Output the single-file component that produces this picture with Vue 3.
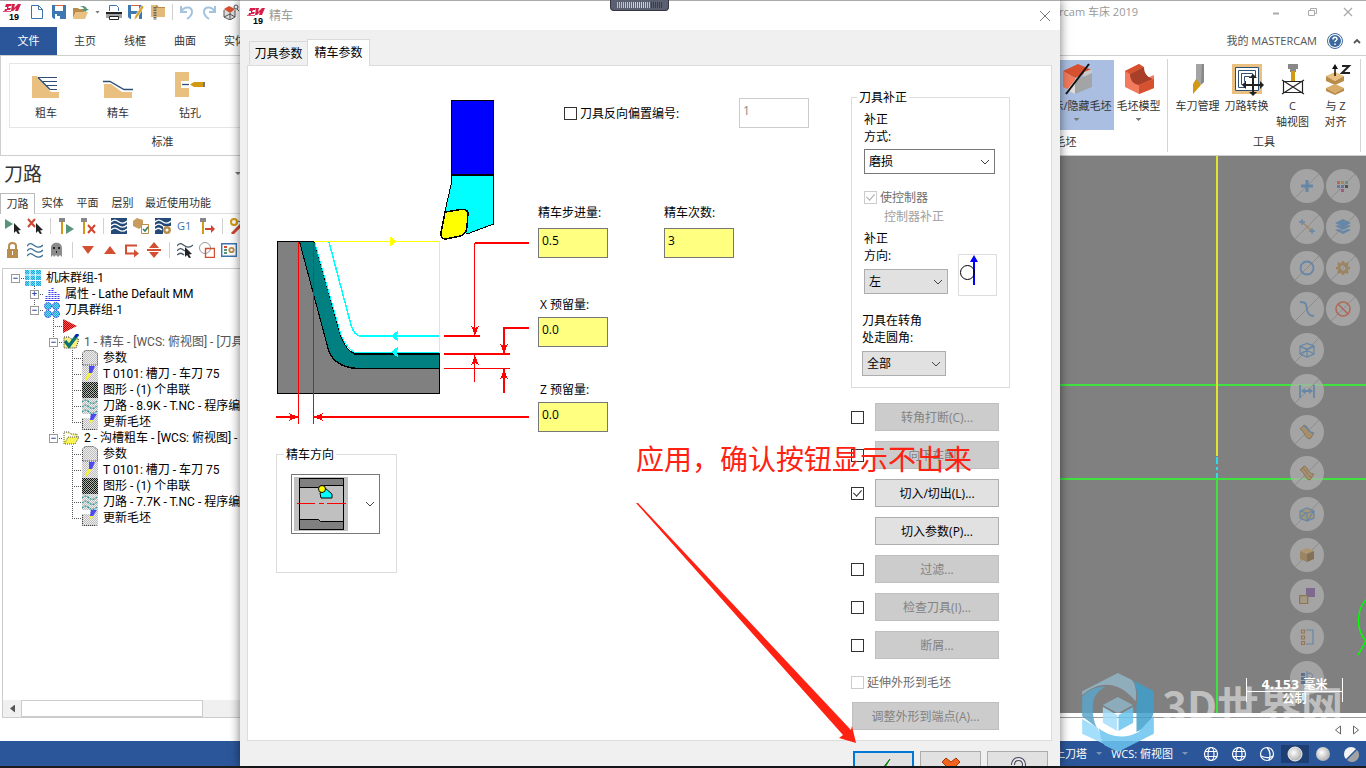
<script setup>
import { ref } from 'vue'

const icons = {
  logo: '<path d="M3 1h6l-1 2H6L5 5h3L7 7H4l-1 2H1l1-3h2V4H2z M9 1h3l-1 4 4-4h3l-3 7h-3l1-3-3 3H8z" fill="#d6204b"/><path d="M0 8h8v1H0z" fill="#e2557a"/><text x="6" y="17" font-family="Liberation Sans, sans-serif" font-weight="bold" font-size="9" fill="#000">19</text>',
  newFile: '<path d="M2.500 1.500h7l4 4v9h-11z M9.500 1.500v4h4" fill="#fff" stroke="#3d74ad"/>',
  save: '<path d="M1 1h14v14H3l-2-2z" fill="#3e78b3"/><path d="M4 1h8v6H4z M4 10h8v5H4z" fill="#fff"/><path d="M6 10h6v5H9v-3H6z" fill="#3e78b3"/><path d="M4 1h8v1H4z" fill="#d8643a"/>',
  open: '<path d="M0 4h5l1 1h5v3H3l-3 6z" fill="#b98c48"/><path d="M3 8h12l-3 7H0z" fill="#e8c080"/><path d="M7 3c3-2 6-1 7 2h2l-4 3-3-3h2c-1-2-2-2-4-2z" fill="#579479"/>',
  print: '<path d="M3.500 7V1.500h7l2 2V7" fill="#fff" stroke="#3d74ad"/><path d="M0 8h16v6H0z" fill="#a0a1a5"/><path d="M0 8h16v2H0z" fill="#222"/><path d="M3.500 12.500h9v3h-9z" fill="#fff" stroke="#222"/>',
  saveAs: '<path d="M0 1h14v14H2l-2-2z" fill="#3e78b3"/><path d="M3 2h8v5H3z M3 10h8v5H3z" fill="#fff"/><path d="M3 1h8v1H3z" fill="#d8643a"/><path d="M14 1l2 2-7 11-3 2 1-4z" fill="#d9a026" stroke="#fff" stroke-width=".6"/>',
  zip: '<path d="M1 1h6l2 2h6v10H1z" fill="#e2bb78"/><path d="M1 1h5v3h9V3H8L7 1z" fill="#b98c48"/><path d="M5 3v13" stroke="#666" stroke-width="3" stroke-dasharray="1.500 1"/>',
  undo: '<path d="M2 2v6h6 M2 8C5 2 13 2 13 8c0 3-2 5-5 7" fill="none" stroke="#a5c3df" stroke-width="2"/>',
  redo: '<path d="M14 2v6H8 M14 8C11 2 3 2 3 8c0 3 2 5 5 7" fill="none" stroke="#a5c3df" stroke-width="2"/>',
  part: '<path d="M1 5v8l6 3 5-3V6L7 3z" fill="#ddd"/><path d="M1 5l5-3 6 3-5 4z" fill="#d6512f"/><path d="M1 6v7l6 3 5-3V6M7 9v7M1 13l6-3 5 3" fill="none" stroke="#555"/><circle cx="13" cy="3" r="2" fill="#fff" stroke="#555"/><path d="M14 5l2 2" stroke="#555"/>',
  playSel: '<path d="M0 1l8 5-8 5z" fill="#579479"/><path d="M9 5l7 7-3 .5 2 3-2 .5-2-3-2 2z" fill="#222"/>',
  xSel: '<path d="M1 1l7 8M8 1L1 9" stroke="#cf4630" stroke-width="2"/><path d="M9 5l7 7-3 .5 2 3-2 .5-2-3-2 2z" fill="#222"/>',
  toolPlay: '<path d="M1 0h6v4H1z" fill="#888"/><path d="M3 4h2v12H3z" fill="#d19a12"/><path d="M8 6l8 5-8 5z" fill="#579479"/>',
  toolX: '<path d="M1 0h6v4H1z" fill="#888"/><path d="M3 4h2v12H3z" fill="#d19a12"/><path d="M8 7l7 8M15 7l-7 8" stroke="#cf4630" stroke-width="2"/>',
  wavesBox: '<path d="M0 0h16v16H0z" fill="#254a78"/><path d="M0 4c3-3 5-2 8 0s5 2 8-1M0 8c3-3 5-2 8 0s5 2 8-1M0 12c3-3 5-2 8 0s5 2 8-1" fill="none" stroke="#fff" stroke-width="1.300"/>',
  stock: '<path d="M0 3l4-3 6 2v6l-4 3-6-3z" fill="#c79c5c"/><path d="M8.500 6.500h7v9h-7z" fill="#fff" stroke="#b98c48"/><path d="M10 11l2 2 3-4" fill="none" stroke="#2c7d5b" stroke-width="1.500"/>',
  wavesGear: '<path d="M0 0h16v8H8v8H0z" fill="#254a78"/><path d="M0 4c3-3 5-2 8 0s5 2 8-1M0 8c3-3 5-2 8 0M0 12c3-3 5-2 7 0" fill="none" stroke="#fff" stroke-width="1.300"/><circle cx="12" cy="12" r="2.700" fill="none" stroke="#b98c48" stroke-width="2.400"/>',
  g1: '<text x="0" y="12" font-family="Open Sans, sans-serif" font-size="11" fill="#3d74ad">G1</text>',
  toolArrow: '<path d="M1 0h6v4H1z" fill="#888"/><path d="M3 4h2v12H3z" fill="#d19a12"/><path d="M6 10h6V7l4 4-4 4v-3H6z" fill="#cf4630"/>',
  wand: '<path d="M2 16L15 3" stroke="#cf4630" stroke-width="3"/><circle cx="4" cy="4" r="3" fill="none" stroke="#d19a12" stroke-width="2"/><path d="M8 3c3 2 5-1 8-2" fill="none" stroke="#555"/>',
  lock: '<path d="M4 8V4c0-4 7-4 7 0v4" fill="none" stroke="#bb8d4d" stroke-width="2"/><path d="M2 7h11v9H2z" fill="#bb8d4d"/><path d="M7 9h1v4H7z" fill="#fff"/>',
  waves: '<path d="M0 4c3-4 5-2 8 0s5 2 8-1M0 9c3-4 5-2 8 0s5 2 8-1M0 14c3-4 5-2 8 0s5 2 8-1" fill="none" stroke="#3d6f96" stroke-width="1.300"/>',
  ghost: '<path d="M2 15V6c0-7 11-7 11 0v9l-2-2-2 2-2-2-2 2-1-2z" fill="#8c8c8c"/><path d="M4 5h2v2H4z M9 5h2v2H9z M7 9h1v2H7z" fill="#222"/>',
  down: '<path d="M2 4h12l-6 8z" fill="#d24f32"/>',
  up: '<path d="M2 12h12L8 4z" fill="#d24f32"/>',
  loop: '<path d="M13 3.500H2v8h9" fill="none" stroke="#d24f32" stroke-width="2"/><path d="M10 7.500l5 4-5 4z" fill="#d24f32"/>',
  upDown: '<path d="M3 6l5-6 5 6z M3 10l5 6 5-6z M1 7h14v2H1z" fill="#d24f32"/>',
  wavesSel: '<path d="M0 4c3-4 5-2 8 0s5 2 8-1M0 9c3-4 5-2 8 0M0 13c3-3 5-2 7 0" fill="none" stroke="#456" stroke-width="1.200"/><path d="M8 5l7 7-3 .5 2 3-2 .5-2-3-2 2z" fill="#222"/>',
  shapes: '<circle cx="6" cy="6" r="5.500" fill="none" stroke="#999"/><path d="M6.500 6.500h9v9h-9z" fill="none" stroke="#d24f32" stroke-width="1.400"/>',
  listGear: '<path d="M.7 1.700h14.600v12.600H.7z" fill="#fff" stroke="#3d74ad" stroke-width="1.400"/><path d="M3 4h3v2H3z" fill="#d24f32"/><path d="M3 7h3v2H3z M3 10h3v2H3z" fill="#579479"/><circle cx="10.500" cy="8" r="2.200" fill="none" stroke="#b98c48" stroke-width="1.800"/>',
  // tree
  grid: '<rect width="16" height="16" fill="url(#dotCyan)"/><path d="M5 0v16M10.500 0v16M0 5h16M0 10.500h16" stroke="#fff" stroke-width="1"/>',
  bars: '<path d="M2.500 15V9M5.500 15V4M8.500 15V1M11.500 15V5M14.500 15V8" stroke="#3a3af0" stroke-width="2" stroke-dasharray="1 1"/><path d="M1 14.500h15" stroke="#3a3af0"/>',
  circles: '<g fill="url(#dotCyan)" stroke="#1717d8" stroke-dasharray="1 1"><circle cx="4" cy="4" r="3.500"/><circle cx="12" cy="4" r="3.500"/><circle cx="4" cy="12" r="3.500"/><circle cx="12" cy="12" r="3.500"/></g>',
  flag: '<path d="M0 1l14 7-14 7z" fill="url(#dotRed)"/>',
  folderOn: '<path d="M1 3h5l2 2h8l-3 9H1z" fill="#f4f080" stroke="#333" stroke-dasharray="1 1"/><path d="M2 7l4 5 9-12" fill="none" stroke="#0b7272" stroke-width="3.500"/><path d="M12 3l3-3" stroke="#1414c8" stroke-width="2"/>',
  folder: '<path d="M1 2h5l2 2h6v3" fill="#f4f080" stroke="#555" stroke-dasharray="1 1"/><path d="M1 3v11h11l4-7H5l-3 6" fill="#f8f450" stroke="#555" stroke-dasharray="1 1"/>',
  params: '<path d="M0 3l3-3h8l3 2h2v14H0z" fill="url(#dotGray)"/><path d="M.5 15V3l3-2.500h8l4 3V15z" fill="none" stroke="#444" stroke-dasharray="1 1"/>',
  tool: '<rect width="16" height="16" fill="url(#dotGray)"/><path d="M7 0h6l-3 7H7z" fill="#4a4af0"/><path d="M6 7h4l-5 7H3z" fill="#f6f03a"/>',
  geometry: '<rect width="16" height="16" fill="url(#dotDark)"/><path d="M3 3h9v9H3z" fill="none" stroke="#3b8a3b" stroke-dasharray="1 2"/>',
  path: '<rect width="16" height="16" fill="url(#dotGray)"/><path d="M0 4c3-3 5-2 7 0s5 2 8-1M0 9c3-3 5-2 7 0s5 2 8-1M0 14c3-3 5-2 7 0s5 2 8-1" fill="none" stroke="#2b9b9b" stroke-width="1.200" stroke-dasharray="2 1"/>',
  update: '<path d="M0 4h8v-4h8v16H0z" fill="url(#dotGray)"/><path d="M9 0h6l-4 6H8z" fill="#4a4af0"/><path d="M8 6h3l-2 5z" fill="#f6f03a"/><path d="M.5 5v10.500h14" fill="none" stroke="#444" stroke-dasharray="1 1"/>',
  // ribbon
  rough: '<path d="M1 5h5l14 16h8v6H1z" fill="#e9c080"/><path d="M7 6.500h19M11 10.500h15M15 14.500h11M19 18.500h7M7 6.500l12 12" fill="none" stroke="#2c4f76" stroke-width="1.200"/>',
  finish: '<path d="M1 13h7l11 8h10v6H1z" fill="#e9c080"/><path d="M0 10.500h7l14 8h9" fill="none" stroke="#2c4f76" stroke-width="1.300"/>',
  drill: '<path d="M0 1h14v9H6v7h8v9H0z" fill="#e9c080"/><path d="M7 13.500h7" stroke="#2c4f76" stroke-width="1.300"/><path d="M15 13.500l4-2.500h10v5H19z" fill="#d19a12"/><path d="M28 11h2v5h-2z" fill="#777"/>',
  hideStock: '<path d="M1 7l15-7 14 6-17 8z" fill="#d6512f"/><path d="M1 7l12 7v15L1 23z" fill="#f17b5c"/><path d="M13 17l17-11v17l-17 7z" fill="#a3a4a6"/><path d="M22 8l8-3v4l-9 4z" fill="#c9c9c9"/><path d="M13 16v14l-8-4z" fill="#ddd"/><path d="M27 0L4 30" stroke="#111" stroke-width="2"/>',
  stockModel: '<path d="M1 7L15 0l5 4-5 6 3 6 12-5v13l-15 6L1 23z" fill="#f17b5c"/><path d="M1 7L15 0l5 3-14 7z" fill="#d6512f"/><path d="M6 10l14-7c0 6 3 10 9 12l-14 6c-6-1-9-5-9-11z" fill="#a83f28"/><path d="M15 21l15-6v9l-15 6z" fill="#d6512f"/>',
  latheTool: '<path d="M13 0h8v18l-8 5z" fill="#a3a4a6"/><path d="M13 15l5 6-8 9V20z" fill="#d19a12"/><path d="M18 21l3-3V0h-2z" fill="#888"/>',
  transform: '<path d="M0 0h30v30H0z" fill="#e9c080"/><path d="M3 3h24v24H3z" fill="#fff"/><g fill="none" stroke="#2c4f76"><path d="M3.500 3.500h23v23h-23z M13 23.500H6.500v-17h17V14 M13 20.500H9.500v-11h11V14 M14 17.500h-1.500v-5h5V14"/></g><path d="M21 12v18M12 21h18" stroke="#222" stroke-width="2"/><path d="M21 10l4 4h-8z M21 32l4-4h-8z M10 21l4-4v8z M32 21l-4-4v8z" fill="#222"/>',
  cAxis: '<path d="M10 0h10v5h-2v3h-6V5h-2z" fill="#888"/><path d="M13 7h4v11h-4z" fill="#d19a12"/><path d="M5.500 17.500h19v11h-19zM4 16l22 14M26 16L4 30" fill="none" stroke="#222" stroke-width="1.200"/>',
  zAlign: '<path d="M5 12l9-4 9 4-9 5z" fill="#e9c080"/><path d="M5 12l9 5v4l-9-4zM23 12l-9 5v4l9-4z" fill="#b98c48"/><path d="M5 24l9-4 9 4-9 5z" fill="#d8ab66"/><path d="M5 24l9 5v2l-9-4z M23 24l-9 5v2l9-4z" fill="#b98c48"/><path d="M14 12V3" stroke="#111" stroke-width="1.500"/><path d="M14 0l3 5h-6z" fill="#111"/><path d="M21 2h7l-7 7h8" fill="none" stroke="#222" stroke-width="2"/>',
  // viewport
  plus: '<path d="M8 2v12M2 8h12" stroke="#5d82a8" stroke-width="3"/>',
  points: '<path d="M3 0v6M0 3h6M13 9v6M10 12h6" stroke="#5d82a8" stroke-width="1.300"/><path d="M4 4l8 7" stroke="#a3815a" stroke-width="1.300"/>',
  circle: '<circle cx="8" cy="8" r="6.500" fill="none" stroke="#5d82a8" stroke-width="1.800"/>',
  curve: '<path d="M1 1c8 0 6 4 7 8 1 3 2 6 7 6" fill="none" stroke="#5d82a8" stroke-width="1.800"/>',
  wireBox: '<path d="M1 4l7-2.500L15 4v8l-7 3-7-3zM1 4l7 3 7-3M8 7v8M1 12l14-8M15 12L1 4" fill="none" stroke="#5d82a8" stroke-width="1.200"/>',
  dimension: '<path d="M1 2v13M15 2v13M3 8h10" stroke="#5d82a8" stroke-width="1.800"/><path d="M2 8l4-3v6z M14 8l-4-3v6z" fill="#5d82a8"/>',
  surface: '<path d="M1 5l4-4c5 1 3 8 10 8l-4 6C5 14 6 7 1 5z" fill="#a98c62" stroke="#866f50"/><path d="M5 2c5 1 3 7 10 7" fill="none" stroke="#5d82a8" stroke-width="1.500"/>',
  surface2: '<path d="M1 5l4-4c5 1 3 8 10 8l-4 6C5 14 6 7 1 5zM3 3c5 1 4 8 10 9" fill="#a98c62" stroke="#866f50"/>',
  solidBox: '<path d="M1 5l7-3 7 3v7l-7 3-7-3z" fill="#a59674"/><path d="M1 5l7-3 7 3v7l-7 3-7-3zM1 5l7 2 7-2M8 7v8M2 11l5-4M9 14l5-8" fill="none" stroke="#5d82a8" stroke-width="1.200"/>',
  solid: '<path d="M1 4l7-3 7 3-7 3z" fill="#b09468"/><path d="M1 4l7 3v8l-7-3z" fill="#9b8058"/><path d="M15 4L8 7v8l7-3z" fill="#7e6848"/>',
  squares: '<path d="M7 0h9v9H7z" fill="#77608b"/><path d="M.7 7.700h8v8h-8z" fill="#a39880" stroke="#8b6f4a" stroke-width="1.300"/>',
  list: '<path d="M2.500 1h3v3h-3z M2.500 7h3v3h-3z M2.500 12.500h3v3h-3z" fill="none" stroke="#946f46" stroke-width="1.200"/><path d="M7 1h7v14H7" fill="none" stroke="#5d82a8" stroke-width="1.200"/>',
  levels: '<path d="M2 3h4v3H2z M2 7h4v3H2z M2 11h4v3H2z" fill="#50698c"/><path d="M8 4c4-3 8 2 4 4M8 1v12" fill="none" stroke="#5d82a8"/>',
  palette: '<path d="M2 3h3v3H2z" fill="#b0624f"/><path d="M6 3h3v3H6z" fill="#a9834a"/><path d="M10 3h3v3h-3z" fill="#5f8f80"/><path d="M2 7h3v3H2z M6 7h3v3H6z" fill="#5d7398"/><path d="M10 7h3v3h-3z" fill="#444"/><path d="M6 11h3v3H6z" fill="#a44d79"/>',
  layers: '<path d="M8 0l8 4-8 4-8-4z M0 7l3-1 5 2 5-2 3 1-8 4z M0 11l3-1 5 2 5-2 3 1-8 4z" fill="#5d82a8"/>',
  gear: '<circle cx="8" cy="8" r="4" fill="none" stroke="#9a8058" stroke-width="3"/><path d="M8 1v3M8 12v3M1 8h3M12 8h3M3 3l2 2M11 11l2 2M13 3l-2 2M5 11l-2 2" stroke="#9a8058" stroke-width="2.500"/>',
  ban: '<circle cx="8" cy="8" r="7" fill="none" stroke="#b3604c" stroke-width="1.600"/><path d="M3 3l10 10" stroke="#b3604c" stroke-width="1.600"/>',
  globe: '<circle cx="8" cy="8" r="6.500"/><ellipse cx="8" cy="8" rx="3" ry="6.500"/><path d="M2 5.500h12M2 10.500h12"/>',
  globe2: '<circle cx="8" cy="8" r="6.500"/><path d="M8 1.500c3 3 4 7 2 13M2 10c4 2 9 2 12 0"/>'
}

const quick = ['newFile', 'save', 'open', 'caret', 'print', 'saveAs', 'zip', 'sep', 'undo', 'redo', 'part']
const bar1 = ['playSel', 'xSel', 'sep', 'toolPlay', 'toolX', 'sep', 'wavesBox', 'stock', 'wavesGear', 'g1', 'toolArrow', 'sep', 'wand']
const bar2 = ['lock', 'waves', 'ghost', 'sep', 'down', 'up', 'loop', 'upDown', 'sep', 'wavesSel', 'shapes', 'listGear']
const managerTabs = ['刀路', '实体', '平面', '层别', '最近使用功能']
const viewLeft = ['plus', 'points', 'circle', 'curve', 'wireBox', 'dimension', 'surface', 'surface2', 'solidBox', 'solid', 'squares', 'list', 'levels']
const viewRight = ['palette', 'layers', 'gear', 'ban']
const slashed = new Set(['plus', 'points', 'circle', 'curve', 'wireBox', 'dimension', 'surface', 'surface2', 'solidBox', 'solid', ...viewRight])

const operation = (size, through) => [
  ['参数', 'params'],
  ['T 0101: 槽刀 - 车刀 75', 'tool'],
  ['图形 - (1) 个串联', 'geometry'],
  [`刀路 - ${size}K - T.NC - 程序编`, 'path'],
  ['更新毛坯', 'update']
].map(([text, icon], i) => ({ text, icon, level: 3, last: i === 4, through: through ? [2] : [] }))

const tree = [
  { text: '机床群组-1', icon: 'grid', level: 0, box: '-', last: true, through: [] },
  { text: '属性 - Lathe Default MM', icon: 'bars', level: 1, box: '+', through: [] },
  { text: '刀具群组-1', icon: 'circles', level: 1, box: '-', last: true, through: [] },
  { text: '', icon: 'flag', level: 2, through: [] },
  { text: '1 - 精车 - [WCS: 俯视图] - [刀具', icon: 'folderOn', level: 2, box: '-', dim: true, through: [] },
  ...operation('8.9', true),
  { text: '2 - 沟槽粗车 - [WCS: 俯视图] -', icon: 'folder', level: 2, box: '-', last: true, through: [] },
  ...operation('7.7', false)
]

const options = ref([
  { text: '转角打断(C)...', on: false, off: true },
  { text: '向下车削...', on: false, off: true },
  { text: '切入/切出(L)...', on: true },
  { text: '切入参数(P)...', plain: true },
  { text: '过滤...', on: false, off: true },
  { text: '检查刀具(I)...', on: false, off: true },
  { text: '断屑...', on: false, off: true }
])
const reverse = ref(false)
</script>

<template>
  <div class="app">
    <svg class="defs" aria-hidden="true">
      <defs>
        <pattern id="dotCyan" width="2" height="2" patternUnits="userSpaceOnUse"><rect width="2" height="2" fill="#4fe6f4" /><path d="M0 0h1v1H0zM1 1h1v1H1z" fill="#2c62c8" opacity=".6" /></pattern>
        <pattern id="dotRed" width="2" height="2" patternUnits="userSpaceOnUse"><rect width="2" height="2" fill="#ff5a5a" /><path d="M0 0h1v1H0zM1 1h1v1H1z" fill="#b00" /></pattern>
        <pattern id="dotGray" width="2" height="2" patternUnits="userSpaceOnUse"><rect width="2" height="2" fill="#eee" /><path d="M0 0h1v1H0zM1 1h1v1H1z" fill="#bdbdbd" /></pattern>
        <pattern id="dotDark" width="2" height="2" patternUnits="userSpaceOnUse"><rect width="2" height="2" fill="#b5b5b5" /><path d="M0 0h1v1H0zM1 1h1v1H1z" fill="#111" /></pattern>
        <radialGradient id="ball" cx=".4" cy=".4" r=".6"><stop offset="0" stop-color="#fff" /><stop offset="1" stop-color="#b0b0b0" /></radialGradient>
      </defs>
    </svg>

    <header class="titlebar">
      <svg class="logo" viewBox="0 0 20 18" v-html="icons.logo"></svg>
      <template v-for="(q, i) in quick" :key="i">
        <i v-if="q === 'sep'" class="sep"></i>
        <i v-else-if="q === 'caret'" class="caret"></i>
        <button v-else class="tool" :aria-label="q"><svg viewBox="0 0 16 16" v-html="icons[q]"></svg></button>
      </template>
      <span class="app-title">Mastercam 车床 2019</span>
      <div class="controls">
        <button aria-label="min"><svg viewBox="0 0 12 12"><path d="M3 7.500h6" stroke="#aaa" stroke-width="2" /></svg></button>
        <button aria-label="restore"><svg viewBox="0 0 12 12"><path d="M4.500 4V2.500h6v5H9M2.500 4.500h6v5h-6z" fill="none" stroke="#aaa" /></svg></button>
        <button aria-label="close"><svg viewBox="0 0 12 12"><path d="M2 2l8 8M10 2l-8 8" stroke="#aaa" stroke-width="1.300" /></svg></button>
      </div>
    </header>

    <nav class="menu">
      <button class="file">文件</button>
      <button v-for="m in ['主页', '线框', '曲面', '实体']" :key="m" class="menu-tab">{{ m }}</button>
      <div class="account">
        <span>我的 MASTERCAM</span>
        <svg class="help" viewBox="0 0 16 16"><circle cx="8" cy="8" r="7.500" fill="#fff" stroke="#3d6a9e" /><circle cx="8" cy="8" r="6" fill="#3d6a9e" /><path d="M6 6.500c0-3 4-3 4-.5 0 1.500-2 1.500-2 3M8 10.500v1.500" fill="none" stroke="#fff" stroke-width="1.500" /></svg>
        <svg class="fold" viewBox="0 0 8 8"><path d="M1 6l3-3 3 3" fill="none" stroke="#555" stroke-width="1.800" /></svg>
      </div>
    </nav>

    <section class="ribbon">
      <div class="group standard">
        <div class="gallery">
          <button><svg viewBox="0 0 30 28" v-html="icons.rough"></svg>粗车</button>
          <button><svg viewBox="0 0 30 28" v-html="icons.finish"></svg>精车</button>
          <button><svg viewBox="0 0 30 28" v-html="icons.drill"></svg>钻孔</button>
        </div>
        <p>标准</p>
      </div>
      <div class="group stock">
        <div class="items">
          <button class="wide active"><svg viewBox="0 0 30 30" v-html="icons.hideStock"></svg><span>显示/隐藏毛坯</span><i class="caret"></i></button>
          <button><svg viewBox="0 0 30 30" v-html="icons.stockModel"></svg><span>毛坯模型</span><i class="caret"></i></button>
        </div>
        <p>毛坯</p>
      </div>
      <div class="group tools">
        <div class="items">
          <button><svg viewBox="0 0 30 30" v-html="icons.latheTool"></svg><span>车刀管理</span></button>
          <button><svg viewBox="0 0 30 30" v-html="icons.transform"></svg><span>刀路转换</span></button>
          <button class="narrow"><svg viewBox="0 0 30 30" v-html="icons.cAxis"></svg><span>C<br>轴视图</span></button>
          <button class="narrow"><svg viewBox="0 0 30 30" v-html="icons.zAlign"></svg><span>与 Z<br>对齐</span></button>
        </div>
        <p>工具</p>
      </div>
    </section>

    <main class="workspace">
      <aside class="manager">
        <h2>刀路<i class="caret"></i></h2>
        <div class="manager-tabs">
          <button v-for="(t, i) in managerTabs" :key="t" :class="{ on: i === 0 }">{{ t }}</button>
        </div>
        <div class="bars">
          <div v-for="(bar, b) in [bar1, bar2]" :key="b" class="bar">
            <template v-for="(q, i) in bar" :key="i">
              <i v-if="q === 'sep'" class="sep"></i>
              <button v-else class="tool" :aria-label="q"><svg viewBox="0 0 16 16" v-html="icons[q]"></svg></button>
            </template>
          </div>
        </div>
        <div class="tree">
          <ul>
            <li v-for="(n, i) in tree" :key="i" :class="{ dim: n.dim }">
              <i v-for="l in n.level" :key="l" class="guide" :class="{ line: n.through.includes(l - 1) }"></i>
              <i class="guide own" :class="{ top: n.level > 0, rest: n.level > 0 && !n.last }"><b v-if="n.box">{{ n.box === '-' ? '−' : '+' }}</b></i>
              <svg viewBox="0 0 16 16" v-html="icons[n.icon]"></svg>
              <span>{{ n.text }}</span>
            </li>
          </ul>
          <div class="scroll"><i class="prev"></i><i class="thumb"></i></div>
        </div>
      </aside>

      <section class="stage">
        <div class="viewport">
          <svg class="scene" viewBox="1060 156 306 557">
            <path d="M1060 385h306M1060 479h306" stroke="#3fe23f" stroke-width="2" />
            <path d="M1217 156v300" stroke="#e2e232" stroke-width="2" />
            <path d="M1217 457v22" stroke="#30d8e8" stroke-width="2" stroke-dasharray="7 3 3 3" />
            <path d="M1217 478v235" stroke="#3fe23f" stroke-width="2" />
            <path d="M1366 600c-9 9-11 29 0 41l-8 14" fill="none" stroke="#0f0" stroke-width="1.500" />
          </svg>
          <div class="dots">
            <button v-for="q in viewLeft" :key="q" :class="{ slash: slashed.has(q) }" :aria-label="q"><svg viewBox="0 0 16 16" v-html="icons[q]"></svg></button>
          </div>
          <div class="dots">
            <button v-for="q in viewRight" :key="q" class="slash" :aria-label="q"><svg viewBox="0 0 16 16" v-html="icons[q]"></svg></button>
          </div>
        </div>
        <div class="sheet">
          <svg viewBox="0 0 6 10"><path d="M5.500 1v8l-5-4z" /></svg>
          <svg viewBox="0 0 6 10"><path d="M.5 1v8l5-4z" /></svg>
        </div>
      </section>
    </main>

    <footer class="status">
      <span>上刀塔</span><i class="caret"></i>
      <span>WCS: 俯视图</span><i class="caret"></i>
      <div class="modes">
        <button aria-label="wire"><svg class="wire" viewBox="0 0 16 16" v-html="icons.globe"></svg></button>
        <button aria-label="hidden"><svg class="wire" viewBox="0 0 16 16" v-html="icons.globe"></svg></button>
        <button aria-label="outline"><svg class="wire" viewBox="0 0 16 16" v-html="icons.globe2"></svg></button>
        <button aria-label="shaded" class="on"><svg viewBox="0 0 16 16"><circle cx="8" cy="8" r="7" fill="url(#ball)" stroke="#eee" /></svg></button>
        <button aria-label="smooth"><svg viewBox="0 0 16 16"><circle cx="8" cy="8" r="7" fill="url(#ball)" /></svg></button>
        <button aria-label="half"><svg viewBox="0 0 16 16"><path d="M3 13A7 7 0 0 1 13 3z" fill="#f4f4f4" /><path d="M14 4A7 7 0 0 1 4 14z" fill="#a2a2a2" /></svg></button>
      </div>
    </footer>
    <div class="edge"></div>

    <div class="watermark">
      <svg viewBox="0 0 215 237">
        <path d="M107 0L0 55v12C50 22 110 22 160 85 165 60 160 30 148 20z" fill="#93b5c6" />
        <path d="M155 24l60 31v60c-5 30-25 50-52 62V98c4-30 2-50-8-74z" fill="#3f9fcc" />
        <path d="M0 72c18-20 45-33 70-30-25 10-40 35-38 62 0 30 6 50 14 62L0 130z" fill="#5ba6c9" />
        <path d="M0 138l48 28c4 20 10 35 24 50L0 182z" fill="#94d9fb" />
        <path d="M50 166c35 28 80 32 118 12l47-50v54l-108 55-40-20c-10-14-15-30-17-51z" fill="#6cc5f0" />
        <path d="M60 144l47 28 50-30v14l-50 33-47-31z" fill="#fff" />
        <path d="M107 72l45 24-45 25-45-25z" fill="#8fb3c6" />
        <path d="M62 102l43 24v48l-43-25z" fill="#a5dffa" />
        <path d="M153 102l-44 24v48l44-25z" fill="#6cc5f0" />
      </svg>
      <span>3D世界网</span>
    </div>
    <div class="scale"><span>4.153 毫米</span><span>公制</span></div>

    <div class="dialog" role="dialog" aria-label="精车">
      <div class="dialog-title">
        <svg class="logo" viewBox="0 0 20 18" v-html="icons.logo"></svg>
        <span>精车</span>
        <button aria-label="close"><svg viewBox="0 0 12 12"><path d="M1 1l10 10M11 1L1 11" stroke="#777" /></svg></button>
      </div>
      <div class="tabs">
        <button>刀具参数</button>
        <button class="on">精车参数</button>
      </div>
      <form class="panel" @submit.prevent>
        <div class="drawing">
          <svg class="diagram" viewBox="276 98 254 328">
            <g shape-rendering="crispEdges">
              <path d="M451.500 100.500h42V175h-42z" fill="#00f" stroke="#000" />
              <path d="M451.500 175.500h42V224L467 234 445 211l6.500-28z" fill="#0ff" stroke="#000" />
              <path d="M451 175h43" stroke="#000" stroke-width="2" />
              <path d="M445 212l13-2q9-2 10 3l-1 14q-1 8-7 9l-14 3q-6 0-5-6z" fill="#ff0" stroke="#000" stroke-width="1.500" />
              <path d="M277.500 241.500h22l29 109q6 16 26 18h85v25h-162z" fill="gray" stroke="#000" />
              <path d="M299.500 241.500h15l26 94q6 16 15 18.500h84v14h-85q-20-2-26-18z" fill="teal" stroke="#000" />
              <path d="M354 354h86" stroke="#000" stroke-width="2" />
              <path d="M315 243l26 92q6 14 14 17.500h84" fill="none" stroke="#0ff" />
              <path d="M329 242l22 83q3 10 9 11h79" fill="none" stroke="#0ff" stroke-width="1.500" />
              <path d="M398 331l-6 5 6 5-2-5zM398 347l-6 5 6 5-2-5z" fill="#0ff" stroke="#0ff" />
              <path d="M314 241.500h125.500V352" fill="none" stroke="#ff0" />
              <path d="M390 237l6 4.500-6 4.500z" fill="#ff0" stroke="#ff0" />
              <g fill="none" stroke="red">
                <path d="M298.500 242v182M313.500 242v182M444 368.500h66M474.500 243v93M474.500 355v27" />
                <path d="M276 417h22M314 417h215M529 243h-54M444 336h36M444 354h66M529 328h-25v25M504 369v24" stroke-width="2" />
              </g>
              <path d="M298 417l-9-4 2 4-2 4zM314 417l9-4-2 4 2 4zM475 335l-4-9 4 2 4-2zM475 356l-4 9 4-2 4 2zM504 353l-4-9 4 2 4-2zM504 370l-4 9 4-2 4 2z" fill="red" />
            </g>
          </svg>
          <fieldset class="direction">
            <legend>精车方向</legend>
            <button type="button" aria-label="精车方向">
              <svg class="pic" viewBox="0 0 54 54">
                <path d="M0 0h54v54H0z" fill="silver" />
                <path d="M5.500 1.500h44v7h-23l-2 2h-19z M5.500 42.500h19l2 2h23v8h-44z" fill="gray" stroke="#000" />
                <path d="M5.500 1.500h44v51h-44z" fill="none" stroke="#000" />
                <path d="M26 16l5-5 7 6v4H27z" fill="#0ff" stroke="#000" />
                <circle cx="28" cy="12" r="3.500" fill="#ff0" stroke="#000" />
                <path d="M3 26.500h18m4 0h5m3 0h19" stroke="red" />
              </svg>
              <svg class="chev" viewBox="0 0 10 6"><path d="M1 1l4 4 4-4" /></svg>
            </button>
          </fieldset>
        </div>

        <div class="fields">
          <div class="offset">
            <label class="check"><input v-model="reverse" type="checkbox">刀具反向偏置编号:</label>
            <input class="num off" type="text" value="1" disabled aria-label="刀具反向偏置编号">
          </div>
          <div class="steps">
            <label>精车步进量:<input class="num" type="text" value="0.5"></label>
            <label>精车次数:<input class="num" type="text" value="3"></label>
          </div>
          <label class="stay x"><span>X 预留量:</span><input class="num" type="text" value="0.0"></label>
          <label class="stay z"><span>Z 预留量:</span><input class="num" type="text" value="0.0"></label>
        </div>

        <div class="side">
          <fieldset class="comp">
            <legend>刀具补正</legend>
            <label for="mode">补正<br>方式:</label>
            <div class="select white"><select id="mode"><option>磨损</option></select><svg class="chev" viewBox="0 0 10 6"><path d="M1 1l4 4 4-4" /></svg></div>
            <label class="check dim"><input type="checkbox" checked disabled>使控制器</label>
            <p class="sub">控制器补正</p>
            <div class="dir">
              <div>
                <label for="dir">补正<br>方向:</label>
                <div class="select"><select id="dir"><option>左</option></select><svg class="chev" viewBox="0 0 10 6"><path d="M1 1l4 4 4-4" /></svg></div>
              </div>
              <svg class="side-pic" viewBox="0 0 39 42"><path d="M.5.5h38v41H.5z" fill="#fff" stroke="#dcdcdc" /><path d="M16 31V4" stroke="#00f" stroke-width="2" /><path d="M16 1l4 7h-8z" fill="#00f" /><circle cx="9.500" cy="18.500" r="7" fill="none" stroke="#000" /></svg>
            </div>
            <div class="corner">
              <label for="corner">刀具在转角<br>处走圆角:</label>
              <div class="select"><select id="corner"><option>全部</option></select><svg class="chev" viewBox="0 0 10 6"><path d="M1 1l4 4 4-4" /></svg></div>
            </div>
          </fieldset>
          <div class="options">
            <div v-for="o in options" :key="o.text" class="option">
              <input v-if="!o.plain" v-model="o.on" type="checkbox" :aria-label="o.text">
              <button type="button" class="btn" :disabled="o.off">{{ o.text }}</button>
            </div>
          </div>
          <label class="check dim extend"><input type="checkbox" disabled>延伸外形到毛坯</label>
          <button type="button" class="btn adjust" disabled>调整外形到端点(A)...</button>
        </div>
      </form>
      <div class="actions">
        <button class="ok" aria-label="ok"><svg viewBox="0 0 20 20"><path d="M2 11l5 6L16 2 8 12z" fill="#1fae1f" stroke="#0b7d0b" /></svg></button>
        <button aria-label="cancel"><svg viewBox="0 0 20 20"><path d="M1 5l4-4 5 4 5-4 4 4-5 5 5 5-4 4-5-5-5 5-4-4 5-5z" fill="#f0641e" stroke="#a8380c" /></svg></button>
        <button aria-label="help"><svg viewBox="0 0 20 20"><path d="M5 8c0-8 11-8 11 0 0 4-4 3-4 7" fill="none" stroke="#445" stroke-width="4" /><path d="M5 8c0-8 11-8 11 0 0 4-4 3-4 7" fill="none" stroke="#e8e8f4" stroke-width="2" /></svg></button>
      </div>
    </div>

    <div class="recorder"></div>
    <p class="note">应用，确认按钮显示不出来</p>
    <svg class="arrow" viewBox="0 0 222 242"><path d="M0 0h2l213 227 1-4 4 17-17-5 4-3z" fill="#ff2213" /></svg>
  </div>
</template>

<style>
html, body, #app { height: 100%; margin: 0; }
body { overflow: hidden; background: #fff; }
</style>

<style scoped>
* { box-sizing: border-box; }
.app { position: relative; display: flex; flex-direction: column; height: 100%; overflow: hidden; background: #fff; color: #333; font: 11px/16px "Open Sans", "Noto Sans CJK SC", sans-serif; }
button, input, select { font: inherit; color: inherit; margin: 0; padding: 0; border: 0; background: none; }
p, h2, ul { margin: 0; padding: 0; font-weight: normal; list-style: none; }
svg { display: block; flex: none; }
.defs { position: absolute; width: 0; height: 0; }
.logo { width: 20px; height: 18px; }
.tool, .tool svg { width: 16px; height: 16px; flex: none; }
.sep { flex: none; width: 1px; height: 16px; background: #d0d0d0; }
.caret { flex: none; width: 6px; height: 3px; background: #777; clip-path: polygon(0 0, 100% 0, 50% 100%); }

.titlebar { display: flex; align-items: center; gap: 6px; height: 25px; padding: 0 0 2px 3px; flex: none; border-top: 1px solid #aaa; }
.titlebar .caret { width: 5px; }
.app-title { margin-left: auto; color: #999; }
.controls { display: flex; width: 222px; justify-content: flex-end; gap: 12px; padding-right: 6px; }
.controls button { width: 24px; display: grid; place-items: center; }
.controls svg { width: 12px; height: 12px; }
.menu { display: flex; flex: none; height: 30px; padding-top: 2px; align-items: stretch; }
.file { width: 57px; background: #2b579a; color: #fff; margin-right: 3px; }
.menu-tab { width: 50px; }
.account { display: flex; align-items: center; margin-left: auto; padding-right: 5px; gap: 10px; color: #555; }
.help { width: 16px; height: 16px; }
.fold { width: 8px; height: 8px; }

.ribbon { display: flex; flex: none; height: 101px; border: 1px solid #cfcfcf; border-width: 1px 0 1px 1px; padding-right: 5px; }
.group { display: flex; flex-direction: column; border-right: 1px solid #d4d4d4; margin: 3px 0; }
.group > p { text-align: center; margin-top: auto; padding-bottom: 2px; }
.standard { width: 324px; margin-right: auto; }
.gallery { display: flex; height: 65px; margin: 4px 8px 0; border: 1px solid #e6e6e6; padding-top: 7px; }
.gallery button { width: 72px; display: flex; flex-direction: column; align-items: center; justify-content: flex-start; gap: 6px; }
.gallery svg { width: 30px; height: 28px; }
.stock { width: 204px; }
.stock .items { justify-content: flex-end; padding-right: 4px; }
.tools { width: 193px; }
.tools .items { padding-left: 5px; }
.items { display: flex; }
.items button { width: 49px; height: 70px; margin-top: 1px; padding-top: 4px; display: flex; flex-direction: column; align-items: center; justify-content: flex-start; gap: 4px; white-space: nowrap; }
.items svg { width: 30px; height: 30px; overflow: visible; }
.items .wide { width: 75px; }
.items .narrow { width: 43px; }
.items .active { background: #a9bee0; }

.workspace { display: flex; flex: 1; min-height: 0; }
.manager { display: flex; flex-direction: column; width: 256px; flex: none; padding-bottom: 23px; }
.manager h2 { display: flex; align-items: center; justify-content: space-between; height: 37px; padding: 0 15px 2px 4px; font-size: 19px; line-height: 32px; }
.manager-tabs { display: flex; height: 21px; border-bottom: 1px solid #ddd; }
.manager-tabs button { min-width: 35px; padding: 0 5px; white-space: nowrap; }
.manager-tabs .on { border: 1px solid #bbb; border-bottom: 0; background: #fff; height: 21px; }
.bars { padding: 4px 0 8px 5px; display: flex; flex-direction: column; gap: 8px; height: 54px; overflow: hidden; }
.bar { display: flex; gap: 6px; }
.bar .sep { margin: 0 1px; }
.tree { flex: 1; min-height: 0; display: flex; flex-direction: column; margin-left: 2px; border: 1px solid #ccc; border-right: 0; overflow: hidden; color: #000; font: 12px/16px Roboto, "Noto Sans CJK SC", sans-serif; }
.tree ul { flex: 1; padding: 1px 0 0 3px; }
.tree li { display: flex; height: 16px; white-space: nowrap; }
.tree .dim { color: #555; }
.tree li svg { width: 16px; height: 16px; margin-right: 5px; }
.guide { position: relative; width: 19px; height: 16px; flex: none; }
.guide.line, .guide.rest { background: repeating-linear-gradient(#555 0 1px, transparent 1px 2px) 9px 0 / 1px 16px no-repeat; }
.guide.top:not(.rest) { background: repeating-linear-gradient(#555 0 1px, transparent 1px 2px) 9px 0 / 1px 8px no-repeat; }
.own::after { content: ""; position: absolute; left: 9px; right: 0; top: 8px; height: 1px; background: repeating-linear-gradient(90deg, #555 0 1px, transparent 1px 2px); }
.own b { position: absolute; z-index: 1; left: 5px; top: 4px; width: 9px; height: 9px; border: 1px solid #999; background: #fff; color: #2b4fa0; font: bold 9px/7px "Liberation Sans", sans-serif; text-align: center; }
.scroll { display: flex; height: 17px; background: #f0f0f0; align-items: center; }
.scroll .prev { width: 5px; height: 8px; margin: 0 6px 0 7px; background: #555; clip-path: polygon(100% 0, 100% 100%, 0 50%); }
.thumb { width: 182px; height: 17px; background: #fff; border: 1px solid #ccc; }

.stage { flex: 1; min-width: 0; display: flex; flex-direction: column; }
.viewport { position: relative; flex: 1; min-height: 0; display: flex; justify-content: flex-end; gap: 2px; padding: 13px 6px 0 0; background: #808080; overflow: hidden; }
.scene { position: absolute; top: 0; right: 0; width: 306px; height: 557px; }
.dots { display: flex; flex-direction: column; gap: 7px; }
.dots button { position: relative; width: 34px; height: 34px; flex: none; border-radius: 50%; background: rgba(178, 178, 178, .72); display: grid; place-items: center; }
.dots .slash { background: linear-gradient(135deg, transparent 49%, #8d8d8d 49% 51%, transparent 51%), rgba(178, 178, 178, .72); }
.dots svg { width: 16px; height: 16px; opacity: .85; }
.scale { position: absolute; right: 23px; bottom: 62px; width: 97px; height: 28px; color: #fff; font: bold 12px/14px "DejaVu Sans", "Noto Sans CJK SC", sans-serif; text-align: center; display: grid; background: linear-gradient(#fff, #fff) 0 13px / 100% 1px no-repeat, linear-gradient(#fff, #fff) 0 0 / 1px 24px no-repeat, linear-gradient(#fff, #fff) 100% 0 / 1px 24px no-repeat; }
.sheet { height: 28px; flex: none; background: linear-gradient(#999, #999) 0 4px / 100% 1px no-repeat, #fff; display: flex; justify-content: flex-end; align-items: center; gap: 12px; padding: 5px 7px 0; }
.sheet svg { width: 6px; height: 10px; fill: none; stroke: #666; }

.status { display: flex; align-items: center; justify-content: flex-end; flex: none; height: 25px; padding-right: 1px; gap: 9px; background: #2b579a; color: #fff; }
.status .caret { background: #8093b5; }
.modes { display: flex; }
.modes button { width: 28px; height: 18px; display: grid; place-items: center; }
.modes .on { background: #1d3f73; }
.modes svg { width: 16px; height: 16px; }
.wire { fill: none; stroke: #fff; stroke-width: 1.2; }
.edge { height: 2px; flex: none; background: #1c1c20; }

.watermark { position: absolute; right: 23px; bottom: 16px; display: flex; align-items: center; gap: 8px; }
.watermark svg { width: 72px; height: 79px; opacity: .85; }
.watermark span { font: bold 42px/48px "Noto Sans CJK SC", sans-serif; color: rgba(255, 255, 255, .5); padding-bottom: 18px; }

.dialog { position: absolute; top: 0; bottom: 2px; left: 240px; right: 306px; display: flex; flex-direction: column; overflow: hidden; border-top: 1px solid #aaa; background: #f0f0f0; box-shadow: 0 0 10px rgba(0, 0, 0, .55); color: #000; font-size: 12px; line-height: 17px; }
.dialog-title { display: flex; align-items: center; height: 29px; flex: none; padding: 0 9px 0 7px; background: #fff; color: #999; gap: 2px; }
.dialog-title button { margin-left: auto; }
.dialog-title button svg { width: 12px; height: 12px; }
.tabs { display: flex; align-items: flex-end; height: 35px; flex: none; padding-left: 9px; }
.tabs button { height: 24px; width: 59px; border: 1px solid #d9d9d9; border-bottom: 0; }
.tabs .on { width: 63px; height: 27px; margin: 0 0 -1px -1px; background: #fff; z-index: 1; padding-bottom: 2px; }
.panel { display: grid; grid-template-columns: 254px 1fr 159px; column-gap: 8px; flex: none; margin: 0 8px 0 7px; padding: 23px 41px 10px 28px; background: #fff; border: 1px solid #dcdcdc; }
.drawing { padding-top: 9px; }
.diagram { width: 254px; height: 328px; }
fieldset { margin: 0; padding: 0; border: 1px solid #dcdcdc; min-width: 0; }
legend { padding: 0 2px; margin-left: -7px; }
.direction { width: 121px; margin-top: 20px; padding: 11px 14px 38px; }
.direction button { width: 89px; height: 60px; border: 1px solid #777; display: flex; align-items: center; justify-content: space-between; padding: 0 4px 0 2px; }
.pic { width: 54px; height: 54px; }
.chev { width: 10px; height: 6px; fill: none; stroke: #444; }
.fields { padding-top: 9px; }
.offset { display: grid; grid-template-columns: 175px 70px; align-items: center; margin-left: 26px; }
.check { display: flex; align-items: center; gap: 3px; }
.num { display: block; width: 70px; height: 30px; padding: 0 3px 6px; border: 1px solid #777; background: #ffff80; }
.num.off { background: #fff; border-color: #ccc; color: #888; }
input[type="checkbox"] { appearance: none; position: relative; width: 13px; height: 13px; flex: none; border: 1px solid #333; background: #fff; }
input[type="checkbox"]:disabled { border-color: #ccc; }
input[type="checkbox"]:checked::after { content: ""; position: absolute; left: 3px; top: 0; width: 4px; height: 7px; border: solid #333; border-width: 0 1px 1px 0; transform: rotate(42deg); }
input[type="checkbox"]:disabled:checked::after { border-color: #aaa; }
.steps { display: flex; gap: 56px; margin-top: 76px; }
.steps label { width: 70px; white-space: nowrap; display: grid; gap: 7px; }
.stay { display: grid; gap: 4px; width: 70px; margin-top: 38px; }
.stay.z { margin-top: 34px; }
.stay span { padding-left: 2px; white-space: nowrap; }
.comp { padding: 5px 12px 11px; }
.comp label { display: block; }
.comp .check { display: flex; margin-top: 15px; }
.check.dim { color: #6d6d6d; }
.sub { color: #a0a0a0; padding-left: 20px; margin-top: 2px; }
.select { position: relative; width: 84px; height: 25px; margin-top: 5px; background: #e1e1e1; border: 1px solid #adadad; }
.select.white { width: 131px; margin-top: 4px; background: #fff; border-color: #777; }
.select select { appearance: none; width: 100%; height: 23px; padding-left: 4px; }
.select .chev { position: absolute; right: 4px; top: 9px; pointer-events: none; }
.dir { display: flex; gap: 10px; align-items: flex-end; margin-top: 5px; }
.dir > div { padding-bottom: 2px; }
.side-pic { width: 39px; height: 42px; }
.corner { margin: 16px 0 0 -2px; }
.options { display: grid; gap: 10px; margin-top: 15px; }
.option { display: flex; align-items: center; justify-content: space-between; padding-right: 11px; }
.option .btn { width: 124px; margin-left: auto; }
.btn { height: 28px; border: 1px solid #adadad; background: #e1e1e1; }
.btn:disabled { background: #ccc; border-color: #bfbfbf; color: #838383; }
.extend { margin-top: 15px; }
.adjust { display: block; width: 147px; margin: 11px 0 0 1px; }
.actions { display: flex; justify-content: flex-end; gap: 6px; padding: 10px 12px 0; flex: none; }
.actions button { width: 61px; height: 32px; border: 1px solid #adadad; background: #e1e1e1; display: grid; place-items: center; }
.actions .ok { border: 2px solid #0078d7; }
.actions svg { width: 20px; height: 20px; }

.recorder { position: absolute; top: 0; left: 610px; width: 59px; height: 11px; border-radius: 0 0 4px 4px; border: 1px solid #33353f; border-top: 0; background: repeating-linear-gradient(90deg, transparent 0 1px, #5b6070 1px 2px) 6px 2px / 46px 6px no-repeat, linear-gradient(90deg, #7fd6d0, #d8e38a 50%, #efb45c 74%, #3b3e49 74%) 6px 2px / 46px 6px no-repeat, #5b6070; }
.note { position: absolute; left: 636px; top: 440px; font-size: 28px; line-height: 38px; color: #ff2213; white-space: nowrap; }
.arrow { position: absolute; left: 636px; top: 503px; width: 222px; height: 242px; }
</style>
